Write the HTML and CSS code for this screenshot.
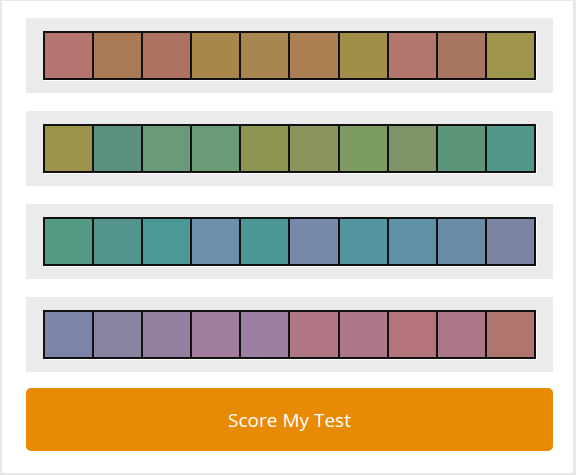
FILE: index.html
```html
<!DOCTYPE html>
<html lang="en">

<head>
  <meta charset="UTF-8">
  <meta name="viewport" content="width=device-width, initial-scale=1.0">
  <title>Hue Test</title>
  <link rel="stylesheet" href="styles.css">
</head>

<body>

  <div class="test-page">

    <!-- Row 1 -->
    <div class="hue-row">
      <div class="hue-strip">
        <div class="chip" style="background:#b47470"></div>
        <div class="chip" style="background:#a97a54"></div>
        <div class="chip" style="background:#ad7260"></div>
        <div class="chip" style="background:#a8884a"></div>
        <div class="chip" style="background:#a88650"></div>
        <div class="chip" style="background:#ab7f52"></div>
        <div class="chip" style="background:#a18f48"></div>
        <div class="chip" style="background:#b2766c"></div>
        <div class="chip" style="background:#a8765e"></div>
        <div class="chip" style="background:#9e944c"></div>
      </div>
    </div>

    <!-- Row 2 -->
    <div class="hue-row">
      <div class="hue-strip">
        <div class="chip" style="background:#9c944c"></div>
        <div class="chip" style="background:#5a907c"></div>
        <div class="chip" style="background:#6a9a78"></div>
        <div class="chip" style="background:#6a9c78"></div>
        <div class="chip" style="background:#8e9452"></div>
        <div class="chip" style="background:#8a945c"></div>
        <div class="chip" style="background:#7c9c62"></div>
        <div class="chip" style="background:#80946a"></div>
        <div class="chip" style="background:#5c967a"></div>
        <div class="chip" style="background:#52988a"></div>
      </div>
    </div>

    <!-- Row 3 -->
    <div class="hue-row">
      <div class="hue-strip">
        <div class="chip" style="background:#549a84"></div>
        <div class="chip" style="background:#54948e"></div>
        <div class="chip" style="background:#4c9a96"></div>
        <div class="chip" style="background:#6e90aa"></div>
        <div class="chip" style="background:#4c9694"></div>
        <div class="chip" style="background:#7888aa"></div>
        <div class="chip" style="background:#5496a0"></div>
        <div class="chip" style="background:#5e90a6"></div>
        <div class="chip" style="background:#6a8aa6"></div>
        <div class="chip" style="background:#7c84a2"></div>
      </div>
    </div>

    <!-- Row 4 -->
    <div class="hue-row">
      <div class="hue-strip">
        <div class="chip" style="background:#7c84a8"></div>
        <div class="chip" style="background:#8a84a2"></div>
        <div class="chip" style="background:#9480a0"></div>
        <div class="chip" style="background:#a07e9c"></div>
        <div class="chip" style="background:#9c80a4"></div>
        <div class="chip" style="background:#b07684"></div>
        <div class="chip" style="background:#ae788a"></div>
        <div class="chip" style="background:#b4747a"></div>
        <div class="chip" style="background:#ac7888"></div>
        <div class="chip" style="background:#b0766e"></div>
      </div>
    </div>

    <button class="score-button">Score My Test</button>

  </div>

</body>

</html>
```

FILE: styles.css
```css
body {
  margin: 0;
  background-color: #ffffff;
  font-family: "Open Sans", Arial, sans-serif;
}

.test-page {
  box-sizing: border-box;
  width: 576px;
  height: 475px;
  border: 2px solid #e8e8e8;
  border-top-width: 1px;
  border-right-width: 3px;
  padding: 17px 20px 0 24px;
  display: flex;
  flex-direction: column;
  gap: 18px;
}

/* Grey band holding one row of chips */
.hue-row {
  background-color: #ebebeb;
  padding: 13px 17px;
}

.hue-strip {
  display: flex;
  height: 49px;
  box-sizing: border-box;
  border: 1px solid #111111;
  box-shadow: 1px 1px 0 #ffffff;
}

.chip {
  flex: 1;
  border: 1px solid #111111;
}

.score-button {
  height: 63px;
  margin-top: -2px;
  background-color: #e88a04;
  color: #ffffff;
  border: none;
  border-radius: 5px;
  font-family: "Open Sans", Arial, sans-serif;
  font-size: 19px;
  cursor: pointer;
}

.score-button:hover {
  background-color: #d67f04;
}
```
